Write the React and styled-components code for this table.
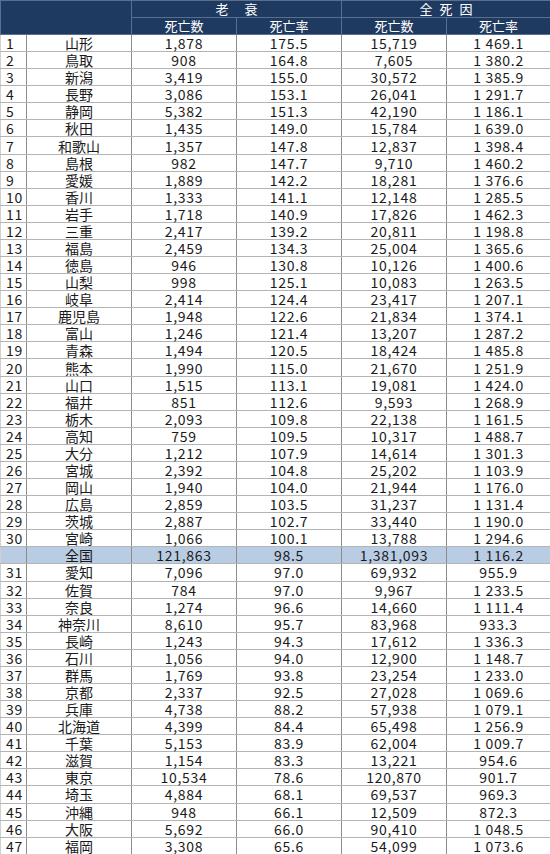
import React from "react";
import styled, { createGlobalStyle } from "styled-components";

const Global = createGlobalStyle`
  html, body { margin: 0; padding: 0; background: #ffffff; }
  body { font-family: "Noto Sans CJK JP", "Noto Sans", sans-serif; }
`;

const rows = [
  ["1", "山形", "1,878", "175.5", "15,719", "1 469.1"],
  ["2", "鳥取", "908", "164.8", "7,605", "1 380.2"],
  ["3", "新潟", "3,419", "155.0", "30,572", "1 385.9"],
  ["4", "長野", "3,086", "153.1", "26,041", "1 291.7"],
  ["5", "静岡", "5,382", "151.3", "42,190", "1 186.1"],
  ["6", "秋田", "1,435", "149.0", "15,784", "1 639.0"],
  ["7", "和歌山", "1,357", "147.8", "12,837", "1 398.4"],
  ["8", "島根", "982", "147.7", "9,710", "1 460.2"],
  ["9", "愛媛", "1,889", "142.2", "18,281", "1 376.6"],
  ["10", "香川", "1,333", "141.1", "12,148", "1 285.5"],
  ["11", "岩手", "1,718", "140.9", "17,826", "1 462.3"],
  ["12", "三重", "2,417", "139.2", "20,811", "1 198.8"],
  ["13", "福島", "2,459", "134.3", "25,004", "1 365.6"],
  ["14", "徳島", "946", "130.8", "10,126", "1 400.6"],
  ["15", "山梨", "998", "125.1", "10,083", "1 263.5"],
  ["16", "岐阜", "2,414", "124.4", "23,417", "1 207.1"],
  ["17", "鹿児島", "1,948", "122.6", "21,834", "1 374.1"],
  ["18", "富山", "1,246", "121.4", "13,207", "1 287.2"],
  ["19", "青森", "1,494", "120.5", "18,424", "1 485.8"],
  ["20", "熊本", "1,990", "115.0", "21,670", "1 251.9"],
  ["21", "山口", "1,515", "113.1", "19,081", "1 424.0"],
  ["22", "福井", "851", "112.6", "9,593", "1 268.9"],
  ["23", "栃木", "2,093", "109.8", "22,138", "1 161.5"],
  ["24", "高知", "759", "109.5", "10,317", "1 488.7"],
  ["25", "大分", "1,212", "107.9", "14,614", "1 301.3"],
  ["26", "宮城", "2,392", "104.8", "25,202", "1 103.9"],
  ["27", "岡山", "1,940", "104.0", "21,944", "1 176.0"],
  ["28", "広島", "2,859", "103.5", "31,237", "1 131.4"],
  ["29", "茨城", "2,887", "102.7", "33,440", "1 190.0"],
  ["30", "宮崎", "1,066", "100.1", "13,788", "1 294.6"],
  ["", "全国", "121,863", "98.5", "1,381,093", "1 116.2", true],
  ["31", "愛知", "7,096", "97.0", "69,932", "955.9"],
  ["32", "佐賀", "784", "97.0", "9,967", "1 233.5"],
  ["33", "奈良", "1,274", "96.6", "14,660", "1 111.4"],
  ["34", "神奈川", "8,610", "95.7", "83,968", "933.3"],
  ["35", "長崎", "1,243", "94.3", "17,612", "1 336.3"],
  ["36", "石川", "1,056", "94.0", "12,900", "1 148.7"],
  ["37", "群馬", "1,769", "93.8", "23,254", "1 233.0"],
  ["38", "京都", "2,337", "92.5", "27,028", "1 069.6"],
  ["39", "兵庫", "4,738", "88.2", "57,938", "1 079.1"],
  ["40", "北海道", "4,399", "84.4", "65,498", "1 256.9"],
  ["41", "千葉", "5,153", "83.9", "62,004", "1 009.7"],
  ["42", "滋賀", "1,154", "83.3", "13,221", "954.6"],
  ["43", "東京", "10,534", "78.6", "120,870", "901.7"],
  ["44", "埼玉", "4,884", "68.1", "69,537", "969.3"],
  ["45", "沖縄", "948", "66.1", "12,509", "872.3"],
  ["46", "大阪", "5,692", "66.0", "90,410", "1 048.5"],
  ["47", "福岡", "3,308", "65.6", "54,099", "1 073.6"],
];

const Table = styled.table`
  width: 550px;
  table-layout: fixed;
  border-collapse: collapse;
  color: #1a1a1a;
`;

const Col = styled.col`
  width: ${(p) => p.$w}px;
`;

const HeadRow = styled.tr`
  height: 17px;
`;

const HeadCell = styled.th`
  background: #1f3a60;
  color: #ffffff;
  font-weight: 400;
  font-size: 13px;
  line-height: 16px;
  padding: 0 0 0 ${(p) => p.$spacing || "0"};
  text-align: center;
  vertical-align: middle;
  border: 1px solid #5a6e8e;
  letter-spacing: ${(p) => p.$spacing || "0"};
  white-space: pre;
`;

const BodyRow = styled.tr`
  height: 17.083px;
  background: ${(p) => (p.$highlight ? "#b8cce4" : "#ffffff")};
`;

const Cell = styled.td`
  padding: 0 0 0 ${(p) => (p.$align === "left" ? "5px" : "0")};
  text-align: ${(p) => p.$align || "center"};
  vertical-align: middle;
  font-size: 14px;
  line-height: 16px;
  letter-spacing: ${(p) => (p.$num ? "0.7px" : "0")};
  border-top: 1px solid #b4b4b4;
  border-bottom: 1px solid #b4b4b4;
  border-left: 1px solid ${(p) => (p.$first ? "#d0d0d0" : "#8c8c8c")};
  border-right: 1px solid #8c8c8c;
  white-space: pre;
`;

export default function App() {
  return (
    <>
      <Global />
      <Table>
        <colgroup>
          <Col $w={26} />
          <Col $w={105} />
          <Col $w={105} />
          <Col $w={105} />
          <Col $w={105} />
          <Col $w={104} />
        </colgroup>
        <thead>
          <HeadRow>
            <HeadCell colSpan={2} rowSpan={2}></HeadCell>
            <HeadCell colSpan={2}>{"老　 衰"}</HeadCell>
            <HeadCell colSpan={2} $spacing="7px">{"全死因"}</HeadCell>
          </HeadRow>
          <HeadRow>
            <HeadCell>死亡数</HeadCell>
            <HeadCell>死亡率</HeadCell>
            <HeadCell>死亡数</HeadCell>
            <HeadCell>死亡率</HeadCell>
          </HeadRow>
        </thead>
        <tbody>
          {rows.map((r, i) => (
            <BodyRow key={i} $highlight={r[6]}>
              <Cell $align="left" $first $num>{r[0]}</Cell>
              <Cell>{r[1]}</Cell>
              <Cell $num>{r[2]}</Cell>
              <Cell $num>{r[3]}</Cell>
              <Cell $num>{r[4]}</Cell>
              <Cell $num>{r[5]}</Cell>
            </BodyRow>
          ))}
        </tbody>
      </Table>
    </>
  );
}
